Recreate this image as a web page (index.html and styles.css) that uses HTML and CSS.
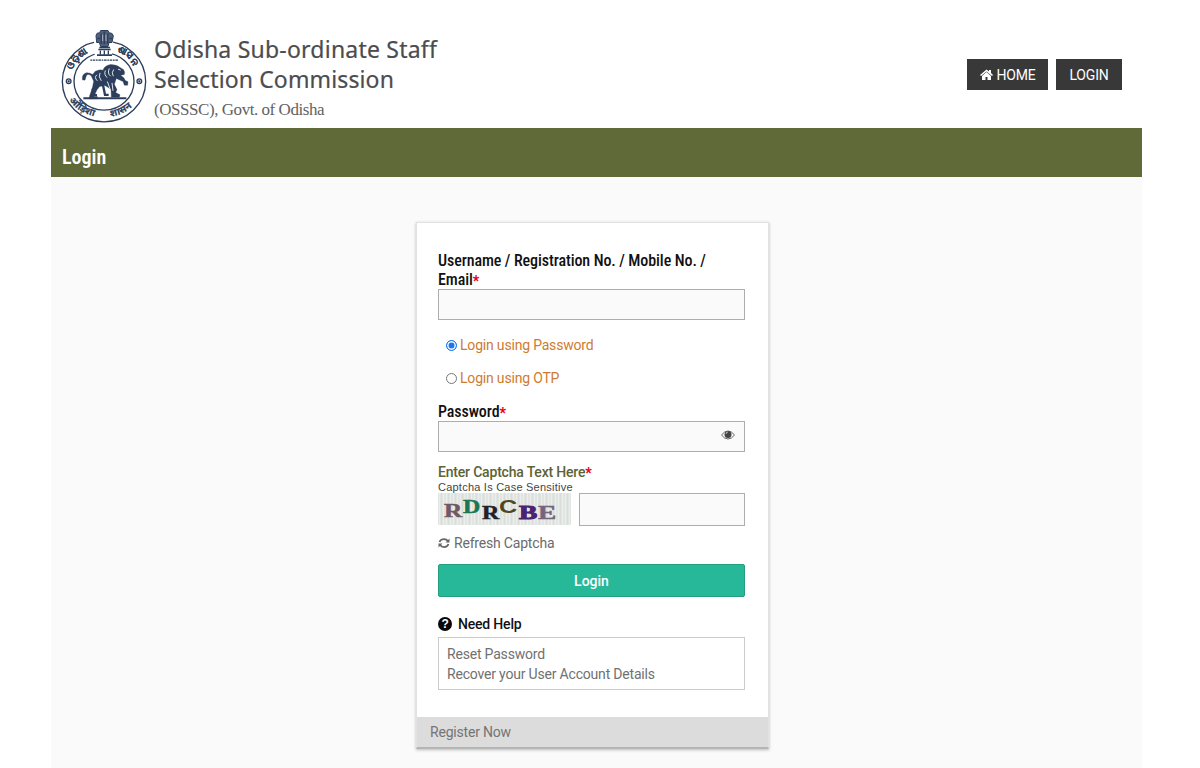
FILE: index.html
```html
<!DOCTYPE html>
<html lang="en">
<head>
<meta charset="utf-8">
<title>Login - Odisha Sub-ordinate Staff Selection Commission</title>
<link rel="stylesheet" href="styles.css">
</head>
<body>
<div class="page">
  <header class="header">
    <svg class="emblem" viewBox="33 24 258 284" fill="none" stroke="#2c3e5c">
      <ellipse cx="162" cy="184" rx="125" ry="121" stroke-width="4"/>
      <ellipse cx="162" cy="184" rx="90" ry="86" stroke-width="4"/>
      <path d="M134 116V80l-4-30q5-16 15-15l5-7h24l5 7q12 0 14 16l-7 28v37z" fill="#fff" stroke="none"/>
      <path d="M138 46q2-10 11-8l3-7h22l3 7q11-1 13 9l-4 20h-9l-3 12h-22l-4-12h-8z" fill="#52617a" stroke-width="3"/>
      <path d="M154 40v31M163 34v38M173 40v31M142 55h8M178 55h9" stroke-width="5"/>
      <path d="M158 43v20M168 43v20" stroke="#e5e9ef" stroke-width="2"/>
      <path d="M148 82h32M145 88h37M141 105h45" stroke-width="5"/>
      <path d="M151 91v12M163 91v12M175 91v12" stroke-width="4"/>
      <path d="M121 120h84" stroke-width="4" stroke-dasharray="5 2 8 2"/>
      <path d="M100 234h129" stroke-width="6"/>
      <path d="M97 179q-2-17 12-21q10-1 19 5l7-9q13-7 24-4q4-14 23-17q18 1 27 8l12 8q5 8 2 14l-11 2q10 6 14 16l8 4-1 10h-10l-4-11-20-9-6 17 8 17-4 8 13 7-2 7h-24l-1-24-18-11-16 3-8 10-9 20h10v7h-25l2-10 8-22 4-21-8-17q-10-7-14 1l-4 13z" fill="#2c3e5c" stroke-width="1"/>
      <path d="M143 191l-15 17 1 17h12M158 190l7 34h11" stroke-width="7"/>
      <path d="M166 151q-5 14 6 21M178 145q-7 15 4 23M191 148q-8 10-1 20M141 164q-10 7 1 18M204 147l8 3M150 158q-6 12 4 24M172 184l8 22M186 188l3 24" stroke="#dfe4ea" stroke-width="3"/>
      <circle cx="56" cy="183" r="7" stroke-width="4"/><circle cx="56" cy="183" r="3" fill="#2c3e5c"/>
      <circle cx="268" cy="183" r="7" stroke-width="4"/><circle cx="268" cy="183" r="3" fill="#2c3e5c"/>
      <path id="arc-l" d="M67 151Q82 110 136 90" stroke="none"/>
      <path id="arc-r" d="M201 92Q244 110 262 160" stroke="none"/>
      <path id="arc-b" d="M54 237Q94 291 162 291T272 232" stroke="none"/>
      <g class="emblem-text">
        <text><textPath href="#arc-l">ଓଡ଼ିଶା</textPath></text>
        <text><textPath href="#arc-r">ଶାସନ</textPath></text>
        <text class="lower"><textPath href="#arc-b" startOffset="5">ओड़िशा</textPath></text>
        <text class="lower"><textPath href="#arc-b" startOffset="146">शासन</textPath></text>
      </g>
    </svg>
    <div class="brand">
      <div class="brand-name">Odisha Sub-ordinate Staff</div>
      <div class="brand-name second">Selection Commission</div>
      <div class="brand-sub">(OSSSC), Govt. of Odisha</div>
    </div>
    <nav class="nav">
      <a class="nav-link home"><svg class="home-icon" viewBox="0 0 26 22" fill="#fff"><path d="M13 1 0 12l2 2L13 5l11 9 2-2-4-4V2h-4v3z"/><path d="M13 6 4 14v8h7v-6h4v6h7v-8z"/></svg><span>HOME</span></a>
      <a class="nav-link"><span>LOGIN</span></a>
    </nav>
  </header>
  <div class="title-bar"><h1 class="title">Login</h1></div>
  <main class="content">
    <form class="card">
      <div class="card-body">
        <label class="label"><span>Username / Registration No. / Mobile No. /</span><br><span>Email</span><span class="req">*</span></label>
        <div class="field"></div>
        <div class="radio-row"><span class="radio checked"></span><span>Login using Password</span></div>
        <div class="radio-row second"><span class="radio"></span><span>Login using OTP</span></div>
        <label class="label pass-label"><span>Password</span><span class="req">*</span></label>
        <div class="field pass"><svg class="eye" viewBox="0 0 28 20"><path d="M1 10Q7 2 14 2t13 8q-6 8-13 8T1 10z" fill="#fafafa" stroke="#666" stroke-width="2"/><circle cx="14" cy="9" r="7" fill="#444"/><path d="M10 8q0-4 4-4" stroke="#ddd" stroke-width="1.500" fill="none"/></svg></div>
        <div class="captcha-label"><span>Enter Captcha Text Here</span><span class="req">*</span></div>
        <div class="captcha-note">Captcha Is Case Sensitive</div>
        <div class="captcha-row">
          <svg class="captcha" viewBox="0 0 133 32">
            <defs><pattern id="stripes" width="7" height="32" patternUnits="userSpaceOnUse"><path d="M1.500 0v32M5.500 0v32" stroke="#eceeec"/><path d="M3.500 0v32" stroke="#d9deda"/></pattern></defs>
            <path d="M0 0h133v32H0z" fill="#e0e5e1"/><path d="M0 0h133v32H0z" fill="url(#stripes)"/>
            <g class="captcha-text">
              <text x="6" y="24" textLength="18" lengthAdjust="spacingAndGlyphs" fill="#705963" stroke="#705963">R</text>
              <text x="25" y="19.500" textLength="17" lengthAdjust="spacingAndGlyphs" fill="#207451" stroke="#207451">D</text>
              <text x="44" y="26" textLength="17" lengthAdjust="spacingAndGlyphs" fill="#242125" stroke="#242125">R</text>
              <text class="sans" x="61" y="19.500" textLength="18" lengthAdjust="spacingAndGlyphs" fill="#524522">C</text>
              <text x="81" y="26" textLength="18" lengthAdjust="spacingAndGlyphs" fill="#4b2371" stroke="#4b2371" stroke-width="1">B</text>
              <text x="100" y="26" textLength="18" lengthAdjust="spacingAndGlyphs" fill="#75647c" stroke="#75647c">E</text>
            </g>
          </svg>
          <div class="field captcha-input"></div>
        </div>
        <div class="refresh"><svg class="refresh-icon" viewBox="0 0 24 24" fill="none" stroke="#666" stroke-width="3.500"><path d="M3 10Q5 4 12 4q5 0 8 4M21 14q-2 6-9 6-5 0-8-4"/><path d="M23 3v8h-8zM1 21v-8h8z" fill="#666" stroke="none"/></svg><span>Refresh Captcha</span></div>
        <div class="login-btn"><span>Login</span></div>
        <div class="help-head"><span class="help-icon">?</span><span>Need Help</span></div>
        <div class="help-box"><div>Reset Password</div><div>Recover your User Account Details</div></div>
      </div>
      <div class="card-foot"><span>Register Now</span></div>
    </form>
  </main>
</div>
</body>
</html>
```
FILE: styles.css
```css
* { box-sizing: border-box; }
body { margin: 0; background: #fff; font-family: Roboto, sans-serif; height: 768px; overflow: hidden; }
.page { width: 1091px; margin-left: 51px; }
.header { height: 128px; display: flex; align-items: flex-start; padding: 28px 20px 0 10px; }
.emblem { width: 86px; height: 95px; flex: none; }
.emblem-text { fill: #2c3e5c; stroke: #2c3e5c; stroke-width: 0.6; font: bold 29px "Noto Sans", sans-serif; letter-spacing: 1px; }
.emblem-text .lower { font-size: 29px; }
.brand { margin-left: 7px; padding-top: 7px; color: #4c4c4e; white-space: nowrap; }
.brand-name { font: 23px/29px "Noto Sans", sans-serif; letter-spacing: 0.22px; height: 29px; -webkit-text-stroke: 0.2px #4c4c4e; }
.brand-name.second { letter-spacing: 0.13px; height: 30px; line-height: 30px; }
.brand-sub { font: 17px/22px "Liberation Serif", serif; margin-top: 5px; color: #626262; letter-spacing: -0.45px; }
.nav { margin-left: auto; margin-top: 31px; display: flex; gap: 8px; }
.nav-link { height: 31px; width: 66px; background: #383838; color: #fff; display: flex; align-items: center; justify-content: center; font-size: 14px; gap: 4px; letter-spacing: -0.2px; }
.nav-link.home { width: 81px; }
.home-icon { width: 13px; height: 11px; }
.title-bar { height: 49px; background: #606a38; padding: 17px 11px 0; }
.title { margin: 0; font: 600 20px/25px "Roboto Condensed", Roboto, sans-serif; font-stretch: 75%; color: #fff; }
.content { height: 591px; background: #fafafa; padding: 45px 0 0 365px; }
.card { width: 353px; height: 527px; background: #fff; border: 1px solid #e2e2e2; box-shadow: 0 1px 3px #bbb; border-bottom: 2px solid #b5b5b5; display: flex; flex-direction: column; }
.card-body { padding: 28px 23px 0 21px; height: 494px; flex: none; letter-spacing: -0.19px; }
.label { display: block; color: #111; font: 500 16px/19px "Roboto Condensed", Roboto, sans-serif; font-stretch: 75%; white-space: nowrap; letter-spacing: -0.09px; }
.req { color: #f00018; font-size: 14px; font-weight: 900; line-height: 0; position: relative; top: 1px; }
.field { height: 31px; border: 1px solid #adadad; background: #fafafa; }
.radio-row { display: flex; align-items: center; height: 20px; margin: 15px 0 0 8px; color: #cf7b2f; font-size: 14px; gap: 3px; }
.radio-row.second { margin-top: 13px; }
.radio { width: 11px; height: 11px; border: 1px solid #777; border-radius: 50%; background: #fff; }
.radio.checked { border-color: #1779ed; background: #1779ed; box-shadow: inset 0 0 0 1.5px #fff; }
.pass-label { margin-top: 14px; }
.pass { display: flex; justify-content: flex-end; padding: 8px 9px 0; }
.eye { width: 14px; height: 10px; }
.captcha-label { color: #5c6335; font-size: 14px; font-weight: 500; line-height: 18px; margin-top: 11px; }
.captcha-note { color: #444; font: 11px/12px "Liberation Sans", sans-serif; letter-spacing: 0.23px; }
.captcha-row { display: flex; gap: 8px; height: 33px; }
.captcha { width: 133px; height: 32px; }
.captcha-text { font: bold 19px "Liberation Serif", serif; stroke-width: 0.5; }
.captcha-text .sans { font-family: "Liberation Sans", sans-serif; }
.captcha-input { flex: 1; height: 33px; }
.refresh { display: flex; align-items: center; height: 20px; margin-top: 7px; font-size: 14px; color: #6b6b6b; gap: 4px; }
.refresh-icon { width: 12px; height: 12px; }
.login-btn { height: 33px; margin-top: 11px; background: #26b899; border: 1px solid #239f7e; border-radius: 2px; color: #fff; display: flex; justify-content: center; align-items: center; font-size: 14px; font-weight: 500; letter-spacing: 0; }
.help-head { display: flex; align-items: center; gap: 6px; height: 20px; margin-top: 17px; color: #111; font-size: 14px; font-weight: 500; }
.help-icon { width: 14px; height: 14px; border-radius: 50%; background: #080808; color: #fff; font: bold 12px/14px "Liberation Sans", sans-serif; text-align: center; }
.help-box { height: 53px; border: 1px solid #cbcbcb; margin-top: 3px; padding: 6px 8px; color: #717171; font-size: 14px; line-height: 20px; }
.card-foot { height: 30px; background: #dcdcdc; padding-left: 13px; line-height: 30px; font-size: 14px; color: #747474; letter-spacing: -0.2px; }
```
